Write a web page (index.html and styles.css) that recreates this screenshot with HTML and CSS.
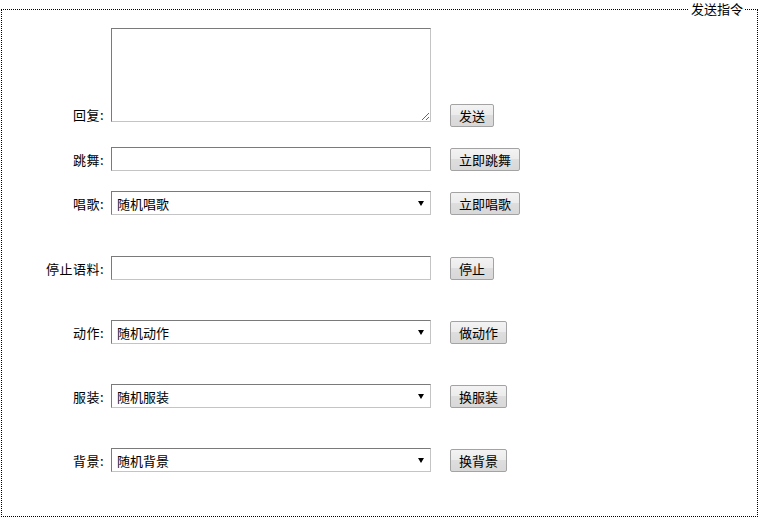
FILE: index.html
```html
<!DOCTYPE html>
<html lang="zh-CN">
<head>
<meta charset="utf-8">
<title>发送指令</title>
<link rel="stylesheet" href="styles.css">
</head>
<body>
<fieldset class="panel">
  <legend class="panel-title">发送指令</legend>
  <div class="row row-reply">
    <label class="label">回复:</label>
    <textarea class="field area"></textarea>
    <button class="btn">发送</button>
  </div>
  <div class="row row-near">
    <label class="label">跳舞:</label>
    <input class="field" type="text">
    <button class="btn">立即跳舞</button>
  </div>
  <div class="row row-near">
    <label class="label">唱歌:</label>
    <div class="select"><select class="field"><option>随机唱歌</option></select></div>
    <button class="btn">立即唱歌</button>
  </div>
  <div class="row row-first-far">
    <label class="label">停止语料:</label>
    <input class="field" type="text">
    <button class="btn">停止</button>
  </div>
  <div class="row row-far">
    <label class="label">动作:</label>
    <div class="select"><select class="field"><option>随机动作</option></select></div>
    <button class="btn">做动作</button>
  </div>
  <div class="row row-far">
    <label class="label">服装:</label>
    <div class="select"><select class="field"><option>随机服装</option></select></div>
    <button class="btn">换服装</button>
  </div>
  <div class="row row-far">
    <label class="label">背景:</label>
    <div class="select"><select class="field"><option>随机背景</option></select></div>
    <button class="btn">换背景</button>
  </div>
</fieldset>
</body>
</html>
```
FILE: styles.css
```css
html, body {
  margin: 0;
  padding: 0;
  background: #fff;
}
body {
  font-family: "Noto Sans CJK SC", "Liberation Sans", sans-serif;
  font-size: 13px;
  color: #000;
}
.panel {
  box-sizing: border-box;
  width: 757px;
  height: 517px;
  margin: 0 0 0 1px;
  padding: 10px 0 0 0;
  border: 1px dotted #000;
  min-width: 0;
}
.panel-title {
  margin-left: auto;
  margin-right: 12px;
  padding: 0 2px;
  line-height: 18px;
  font-size: 13px;
}
.row {
  display: grid;
  grid-template-columns: 102px 320px max-content;
  column-gap: 7px;
  align-items: center;
}
.row-near { margin-top: 20px; }
.row-first-far { margin-top: 41px; }
.row-far { margin-top: 40px; }
.row-reply { align-items: end; }
.label {
  text-align: right;
  line-height: 23px;
  white-space: nowrap;
  letter-spacing: 0.5px;
}
.field {
  box-sizing: border-box;
  width: 320px;
  height: 24px;
  margin: 0;
  padding: 0 5px;
  border: 1px solid;
  border-color: #7a7a7a #c4c4c4 #c4c4c4 #7a7a7a;
  background: #fff;
  font: inherit;
  color: #000;
  border-radius: 0;
  outline: none;
}
.area {
  height: 94px;
  padding: 2px 4px;
  align-self: start;
  margin-bottom: 5px;
}
.row-reply .label { margin-bottom: 1px; }
.select {
  position: relative;
  width: 320px;
  height: 24px;
}
.select select {
  appearance: none;
  -webkit-appearance: none;
  display: block;
}
.select::after {
  content: "";
  position: absolute;
  right: 7px;
  top: 10px;
  width: 0;
  height: 0;
  border-left: 3px solid transparent;
  border-right: 3px solid transparent;
  border-top: 5px solid #000;
  pointer-events: none;
}
.btn {
  box-sizing: border-box;
  justify-self: start;
  margin-left: 12px;
  height: 23px;
  padding: 0 8px;
  border: 1px solid #a3a3a3;
  border-radius: 2px;
  background: linear-gradient(#f3f3f3, #ebebeb 50%, #dedede 50%, #d8d8d8);
  font: inherit;
  line-height: 21px;
  color: #000;
  white-space: nowrap;
}
```
